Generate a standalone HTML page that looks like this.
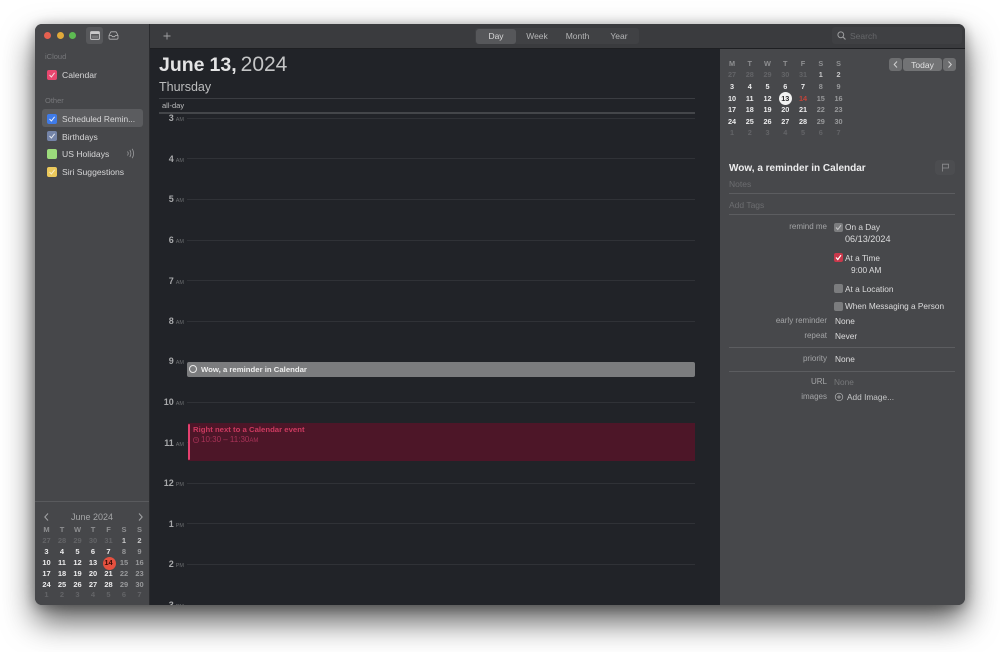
<!DOCTYPE html>
<html><head><meta charset="utf-8"><style>
html,body{margin:0;padding:0;background:#fff}
body{width:1000px;height:652px;position:relative;overflow:hidden;font-family:"Liberation Sans",sans-serif;-webkit-font-smoothing:antialiased}
#wrap{position:absolute;left:0;top:0;width:1000px;height:652px;filter:blur(.35px)}
.a{position:absolute;white-space:nowrap}
#win{left:35px;top:24px;width:930px;height:581px;border-radius:7px;background:#47484b;box-shadow:0 16px 32px rgba(0,0,0,.65),0 2px 12px rgba(0,0,0,.3);overflow:hidden}
.t{position:absolute;white-space:nowrap;line-height:12px}
.c{transform:translateX(-50%)}
.r{transform:translateX(-100%)}
.ln{position:absolute;left:187px;width:508px;height:1px;background:#303237}
.h{position:absolute;font-size:9px;color:#a8a9ab;font-weight:bold;line-height:12px;transform:translateX(-100%)}
.h i{font-style:normal;font-size:5.5px;color:#6b6d70;font-weight:normal;margin-left:2px}
.box{position:absolute;width:10px;height:10px;border-radius:2px}
.box svg{position:absolute;left:0;top:0}
.side{font-size:8.6px;color:#d6d6d7}
.lbl{font-size:8px;color:#a4a5a7}
.val{font-size:8.3px;color:#dcdcdd}
.cb{position:absolute;width:9px;height:9px;border-radius:2px;background:#7b7c7e}
</style></head><body><div id="wrap">
<div id="win" class="a"></div>

<!-- top bar -->
<div class="a" style="left:150px;top:24px;width:815px;height:24px;background:#3a3b3e;border-radius:0 7px 0 0"></div>
<div class="a" style="left:150px;top:48px;width:815px;height:1px;background:#1e1f22"></div>
<!-- sidebar -->
<div class="a" style="left:35px;top:24px;width:114px;height:581px;background:#46474a;border-radius:7px 0 0 7px"></div>
<div class="a" style="left:149px;top:24px;width:1px;height:581px;background:#2a2b2e"></div>
<!-- day pane -->
<div class="a" style="left:150px;top:49px;width:570px;height:556px;background:#212328"></div>
<!-- right pane -->
<div class="a" style="left:720px;top:49px;width:245px;height:556px;background:#47484b;border-radius:0 0 7px 0"></div>

<!-- traffic lights -->
<div class="a" style="left:44px;top:32px;width:7px;height:7px;border-radius:50%;background:#e5604f"></div>
<div class="a" style="left:57px;top:32px;width:7px;height:7px;border-radius:50%;background:#e0a93a"></div>
<div class="a" style="left:69px;top:32px;width:7px;height:7px;border-radius:50%;background:#5dba52"></div>
<div class="a" style="left:86px;top:27px;width:17px;height:17px;border-radius:3px;background:#57585b"></div>
<svg class="a" style="left:90px;top:31px" width="10" height="9" viewBox="0 0 10 9"><rect x=".6" y=".6" width="8.8" height="7.8" rx="1" fill="none" stroke="#c9c9ca"/><rect x="1" y="1" width="8" height="2" fill="#c9c9ca"/><rect x="2" y="4.5" width="6" height="2.5" fill="#77787a"/></svg>
<svg class="a" style="left:108px;top:31px" width="11" height="9" viewBox="0 0 11 9"><path d="M1 4.5 2.6 1.2Q2.8.8 3.4.8H7.6Q8.2.8 8.4 1.2L10 4.5V7Q10 8.2 8.8 8.2H2.2Q1 8.2 1 7ZM1 4.5H3.6L4.4 5.7H6.6L7.4 4.5H10" fill="none" stroke="#b5b5b6" stroke-width=".8"/></svg>

<!-- sidebar list -->
<div class="t" style="left:45px;top:51px;font-size:7.5px;color:#77787b">iCloud</div>
<div class="box" style="left:47px;top:70px;background:#e8476f"><svg width="10" height="10"><path d="M2.5 5 4.4 7 7.6 2.8" fill="none" stroke="#f5dbe2" stroke-width="1"/></svg></div>
<div class="t side" style="left:62px;top:69px">Calendar</div>
<div class="t" style="left:45px;top:95px;font-size:7.5px;color:#77787b">Other</div>
<div class="a" style="left:42px;top:109px;width:101px;height:18px;border-radius:3px;background:#5b5c5f"></div>
<div class="box" style="left:47px;top:114px;background:#3f7be8"><svg width="10" height="10"><path d="M2.5 5 4.4 7 7.6 2.8" fill="none" stroke="#e8effb" stroke-width="1"/></svg></div>
<div class="t side" style="left:62px;top:113px;font-size:8.4px">Scheduled Remin...</div>
<div class="box" style="left:47px;top:131px;background:#7484a8"><svg width="10" height="10"><path d="M2.5 5 4.4 7 7.6 2.8" fill="none" stroke="#e6e9ef" stroke-width="1"/></svg></div>
<div class="t side" style="left:62px;top:131px">Birthdays</div>
<div class="box" style="left:47px;top:149px;background:#9cdb7c"></div>
<div class="t side" style="left:62px;top:148px">US Holidays</div>
<svg class="a" style="left:126px;top:148px" width="9" height="11" viewBox="0 0 9 11"><path d="M1.5 3.5Q3 5.5 1.5 7.5M3.8 2Q6 5.5 3.8 9M6.2.8Q9 5.5 6.2 10.2" fill="none" stroke="#9a9b9d" stroke-width=".8"/></svg>
<div class="box" style="left:47px;top:167px;background:#ecc95c"><svg width="10" height="10"><path d="M2.5 5 4.4 7 7.6 2.8" fill="none" stroke="#f7eec9" stroke-width="1"/></svg></div>
<div class="t side" style="left:62px;top:166px">Siri Suggestions</div>

<!-- left mini calendar -->
<div class="a" style="left:35px;top:501px;width:114px;height:1px;background:#595a5d"></div>
<svg class="a" style="left:43px;top:512px" width="7" height="10"><path d="M5 1.5 1.8 5 5 8.5" fill="none" stroke="#a3a4a6" stroke-width="1"/></svg>
<svg class="a" style="left:137px;top:512px" width="7" height="10"><path d="M2 1.5 5.2 5 2 8.5" fill="none" stroke="#a3a4a6" stroke-width="1"/></svg>
<div class="t c" style="left:92px;top:511px;font-size:9px;color:#a4a5a7">June 2024</div>
<div class="a" style="left:103px;top:556.5px;width:13px;height:13px;border-radius:50%;background:#e5503f"></div>
<div id="cal1"></div>

<!-- toolbar -->
<svg class="a" style="left:162px;top:31px" width="10" height="10"><path d="M5 1.5V8.5M1.5 5H8.5" stroke="#a0a1a3" stroke-width=".9"/></svg>
<div class="a" style="left:475px;top:28px;width:164px;height:16px;border-radius:3px;background:#404144"></div>
<div class="a" style="left:476px;top:28.5px;width:40px;height:15px;border-radius:3px;background:#56575a"></div>
<div class="t c" style="left:496px;top:30px;font-size:8.5px;color:#d8d8d9">Day</div>
<div class="t c" style="left:537px;top:30px;font-size:8.5px;color:#b4b5b6">Week</div>
<div class="t c" style="left:577.5px;top:30px;font-size:8.5px;color:#b4b5b6">Month</div>
<div class="t c" style="left:619px;top:30px;font-size:8.5px;color:#b4b5b6">Year</div>
<div class="a" style="left:832px;top:27px;width:130px;height:17px;border-radius:3px;background:#3f4043"></div>
<svg class="a" style="left:836px;top:30px" width="11" height="11"><circle cx="4.8" cy="4.8" r="2.9" fill="none" stroke="#9b9c9e" stroke-width="1"/><path d="M7 7 9.5 9.5" stroke="#9b9c9e" stroke-width="1.2"/></svg>
<div class="t" style="left:850px;top:30px;font-size:8.5px;color:#66676a">Search</div>

<!-- day header -->
<div class="t" style="left:159px;top:53px;line-height:24px;font-size:21px;color:#e4e4e5;word-spacing:-.4px"><b style="font-size:19.5px">June 13,</b><span style="color:#c4c5c6;margin-left:4px">2024</span></div>
<div class="t" style="left:159px;top:80px;line-height:15px;font-size:12.5px;color:#bcbdbe">Thursday</div>
<div class="a" style="left:159px;top:98px;width:536px;height:1px;background:#3b3d42"></div>
<div class="t" style="left:162px;top:100px;font-size:7.5px;color:#bcbdbe">all-day</div>
<div class="a" style="left:159px;top:112px;width:536px;height:2px;background:#44464a"></div>

<!-- hours -->
<div class="ln" style="top:118px"></div><div class="h" style="left:184px;top:112px">3<i>AM</i></div>
<div class="ln" style="top:158px"></div><div class="h" style="left:184px;top:153px">4<i>AM</i></div>
<div class="ln" style="top:199px"></div><div class="h" style="left:184px;top:193px">5<i>AM</i></div>
<div class="ln" style="top:240px"></div><div class="h" style="left:184px;top:234px">6<i>AM</i></div>
<div class="ln" style="top:280px"></div><div class="h" style="left:184px;top:275px">7<i>AM</i></div>
<div class="ln" style="top:321px"></div><div class="h" style="left:184px;top:315px">8<i>AM</i></div>
<div class="h" style="left:184px;top:355px">9<i>AM</i></div>
<div class="ln" style="top:402px"></div><div class="h" style="left:184px;top:396px">10<i>AM</i></div>
<div class="ln" style="top:442px"></div><div class="h" style="left:184px;top:437px">11<i>AM</i></div>
<div class="ln" style="top:483px"></div><div class="h" style="left:184px;top:477px">12<i>PM</i></div>
<div class="ln" style="top:523px"></div><div class="h" style="left:184px;top:518px">1<i>PM</i></div>
<div class="ln" style="top:564px"></div><div class="h" style="left:184px;top:558px">2<i>PM</i></div>
<div class="h" style="left:184px;top:599px;height:6px;overflow:hidden">3<i>PM</i></div>

<!-- events -->
<div class="a" style="left:187px;top:362px;width:508px;height:15px;border-radius:2px;background:#7b7c7e"></div>
<div class="a" style="left:189px;top:365px;width:6px;height:6px;border:1.3px solid #e8e8e8;border-radius:50%"></div>
<div class="t" style="left:201px;top:364px;font-size:7.75px;font-weight:bold;color:#eeeeee">Wow, a reminder in Calendar</div>
<div class="a" style="left:188px;top:423px;width:507px;height:38px;background:#4d1628"></div>
<div class="a" style="left:188px;top:424px;width:2px;height:36px;border-radius:1px;background:#e5406f"></div>
<div class="t" style="left:193px;top:424px;font-size:7.75px;font-weight:bold;color:#cd3a60">Right next to a Calendar event</div>
<svg class="a" style="left:192px;top:436px" width="8" height="8"><circle cx="4" cy="4" r="2.7" fill="none" stroke="#a93358" stroke-width=".7"/><path d="M4 2.4V4H5.4" fill="none" stroke="#a93358" stroke-width=".6"/></svg>
<div class="t" style="left:201px;top:434px;font-size:8px;color:#a93358">10:30 – 11:30<span style="font-size:6px">AM</span></div>

<!-- right mini calendar -->
<div class="a" style="left:779px;top:92px;width:13px;height:13px;border-radius:50%;background:#f2f2f2"></div>
<div id="cal2"></div>
<div class="a" style="left:889px;top:58px;width:13px;height:13px;border-radius:3px;background:#6d6e70"></div>
<svg class="a" style="left:892px;top:60px" width="8" height="9"><path d="M5 1.5 2.2 4.5 5 7.5" fill="none" stroke="#d0d0d1" stroke-width="1"/></svg>
<div class="a" style="left:903px;top:58px;width:39px;height:13px;border-radius:3px;background:#727375"></div>
<div class="t c" style="left:922.5px;top:59px;font-size:8.5px;color:#e2e2e3">Today</div>
<div class="a" style="left:943px;top:58px;width:13px;height:13px;border-radius:3px;background:#6d6e70"></div>
<svg class="a" style="left:946px;top:60px" width="8" height="9"><path d="M2.5 1.5 5.3 4.5 2.5 7.5" fill="none" stroke="#d0d0d1" stroke-width="1"/></svg>

<!-- reminder details -->
<div class="t" style="left:729px;top:162.5px;font-size:10px;font-weight:bold;color:#ededee">Wow, a reminder in Calendar</div>
<div class="a" style="left:935px;top:160px;width:20px;height:15px;border-radius:4px;background:#4c4d50"></div>
<svg class="a" style="left:941px;top:163px" width="9" height="9"><path d="M1.5 8.5V1.2H7.5V5H1.5" fill="none" stroke="#8f9092" stroke-width=".8"/></svg>
<div class="t" style="left:729px;top:178px;font-size:8.5px;color:#6c6d70">Notes</div>
<div class="a" style="left:729px;top:193px;width:226px;height:1px;background:#5c5d60"></div>
<div class="t" style="left:729px;top:199px;font-size:8.5px;color:#6c6d70">Add Tags</div>
<div class="a" style="left:729px;top:214px;width:226px;height:1px;background:#5c5d60"></div>

<div class="t lbl r" style="left:827px;top:221px">remind me</div>
<div class="cb" style="left:834px;top:223px"><svg width="9" height="9" style="position:absolute;left:0;top:0"><path d="M2 4.5 3.8 6.5 7 2.2" fill="none" stroke="#c6c6c7" stroke-width="1"/></svg></div>
<div class="t val" style="left:845px;top:221px">On a Day</div>
<div class="t val" style="left:845px;top:233px;font-size:9.1px">06/13/2024</div>
<div class="cb" style="left:834px;top:253px;background:#c9384b"><svg width="9" height="9" style="position:absolute;left:0;top:0"><path d="M2 4.5 3.8 6.5 7 2.2" fill="none" stroke="#fff" stroke-width="1.2"/></svg></div>
<div class="t val" style="left:845px;top:252px">At a Time</div>
<div class="t val" style="left:851px;top:264px">9:00 AM</div>
<div class="cb" style="left:834px;top:284px"></div>
<div class="t val" style="left:845px;top:283px">At a Location</div>
<div class="cb" style="left:834px;top:302px"></div>
<div class="t val" style="left:845px;top:301px;font-size:8.25px">When Messaging a Person</div>
<div class="t lbl r" style="left:827px;top:315px">early reminder</div>
<div class="t val" style="left:835px;top:315px">None</div>
<div class="t lbl r" style="left:827px;top:330px">repeat</div>
<div class="t val" style="left:835px;top:330px">Never</div>
<div class="a" style="left:729px;top:347px;width:226px;height:1px;background:#5c5d60"></div>
<div class="t lbl r" style="left:827px;top:353px">priority</div>
<div class="t val" style="left:835px;top:353px">None</div>
<div class="a" style="left:729px;top:371px;width:226px;height:1px;background:#5c5d60"></div>
<div class="t lbl r" style="left:827px;top:376px">URL</div>
<div class="t val" style="left:834px;top:376px;color:#77787a">None</div>
<div class="t lbl r" style="left:827px;top:391px">images</div>
<svg class="a" style="left:834px;top:392px" width="10" height="10"><circle cx="5" cy="5" r="3.8" fill="none" stroke="#b4b5b6" stroke-width=".7"/><path d="M5 3V7M3 5H7" stroke="#b4b5b6" stroke-width=".7"/></svg>
<div class="t val" style="left:847px;top:391px;color:#c4c5c6">Add Image...</div>

</div>
<script>
function cal(id,xs,ys,size,today){
  var rows=[["M","T","W","T","F","S","S"],[27,28,29,30,31,1,2],[3,4,5,6,7,8,9],[10,11,12,13,14,15,16],[17,18,19,20,21,22,23],[24,25,26,27,28,29,30],[1,2,3,4,5,6,7]];
  var h="";
  rows.forEach(function(row,r){row.forEach(function(v,c){
    var col,w="bold";
    if(r==0){col="#8e8f91";w="bold"}
    else if(r==1&&c<5||r==6){col="#636467"}
    else if(c>=5&&r>=2||r==1){col=r==1?"#d0d0d1":"#98999b"}
    else col="#ececed";
    if(r==1&&c>=5)col="#c9c9ca";
    if(r==2&&c==5||r==2&&c==6)col="#98999b";
    if(v===today.v&&r==3){col=today.col}
    if(v===today.red&&r==3){col="#c2443a"}
    h+='<div class="t c" style="left:'+(xs+c*(id=="cal1"?15.5:17.75))+'px;top:'+(ys[r]-6)+'px;font-size:'+size+'px;font-weight:'+w+';color:'+col+'">'+v+'</div>';
  })});
  document.getElementById(id).innerHTML=h;
}
cal("cal1",46.5,[530,541,552,563,573.5,584.5,595],7.5,{v:14,col:"#3b0d08"});
cal("cal2",732,[64,75,87,98.5,110,121.5,133],7.3,{v:13,col:"#2a2b2d",red:14});
</script>
</body></html>
